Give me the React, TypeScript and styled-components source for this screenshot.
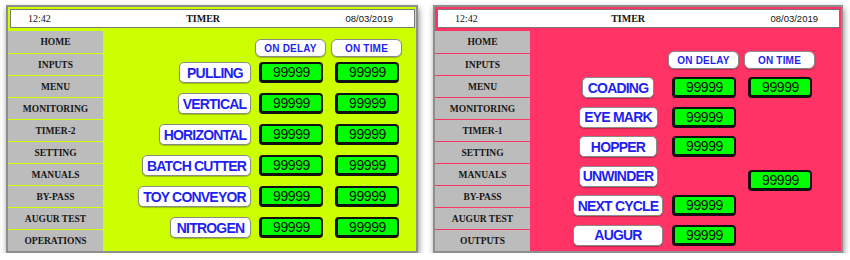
import React from 'react';
import styled, { createGlobalStyle } from 'styled-components';

const GlobalStyle = createGlobalStyle`
  html, body {
    margin: 0;
    padding: 0;
    background: #ffffff;
  }
`;

const Page = styled.div`
  display: flex;
  gap: 15px;
  padding: 5px 0 0 6px;
`;

const Panel = styled.div<{ $bg: string; $w: number }>`
  box-sizing: border-box;
  width: ${p => p.$w}px;
  height: 248px;
  background: ${p => p.$bg};
  border: 2px solid #8e8e8e;
  box-shadow: 1px 3px 6px rgba(0, 0, 0, 0.45);
  display: flex;
  flex-direction: column;
`;

const Header = styled.div`
  box-sizing: border-box;
  height: 19px;
  margin: 2px 1px 0 2px;
  background: #ffffff;
  border: 1px solid #777;
  display: flex;
  align-items: center;
  font-size: 10px;
  color: #111;
`;

const Clock = styled.span`
  padding-left: 17px;
  font-family: "Liberation Serif", serif;
`;

const Title = styled.span<{ $shift: number }>`
  flex: 1;
  text-align: center;
  padding-left: ${p => p.$shift}px;
  font-family: "Liberation Serif", serif;
  font-weight: bold;
`;

const DateText = styled.span`
  padding-right: 21px;
  font-family: "Liberation Sans", Arial, sans-serif;
  font-size: 9.5px;
`;

const Body = styled.div`
  flex: 1;
  display: flex;
  margin-top: 3px;
`;

const Sidebar = styled.div`
  width: 95px;
  display: flex;
  flex-direction: column;
`;

const NavItem = styled.div<{ $line: string }>`
  box-sizing: border-box;
  height: 22px;
  background: #bcbcbc;
  border-top: 1px solid ${p => p.$line};
  display: flex;
  align-items: center;
  justify-content: center;
  font-family: "Liberation Serif", serif;
  font-weight: bold;
  font-size: 9.5px;
  color: #151515;
  &:first-child {
    border-top: none;
  }
`;

const Content = styled.div<{ $top: number; $right: number }>`
  flex: 1;
  display: flex;
  flex-direction: column;
  padding: ${p => p.$top}px ${p => p.$right}px 0 0;
`;

const HeadRow = styled.div<{ $cols: string; $after: number }>`
  display: grid;
  grid-template-columns: ${p => p.$cols};
  justify-content: end;
  column-gap: 4px;
  height: 18px;
  margin-bottom: ${p => p.$after}px;
`;

const Rows = styled.div<{ $gap: number }>`
  display: flex;
  flex-direction: column;
  gap: ${p => p.$gap}px;
`;

const Row = styled.div<{ $cols: string }>`
  display: grid;
  grid-template-columns: ${p => p.$cols};
  justify-content: end;
  column-gap: 4px;
  align-items: center;
  height: 21px;
`;

const ColHead = styled.div<{ $col: number }>`
  grid-column: ${p => p.$col};
  box-sizing: border-box;
  width: 71px;
  height: 18px;
  background: #fff;
  border: 1px solid #8a8a8a;
  border-radius: 6px;
  box-shadow: 0 1px 1px rgba(0, 0, 0, 0.25);
  display: flex;
  align-items: center;
  justify-content: center;
  font-family: "Liberation Sans", Arial, sans-serif;
  font-weight: bold;
  font-size: 10px;
  letter-spacing: 0.2px;
  color: #1f1ff0;
`;

const Label = styled.div<{ $w: number; $align: string }>`
  grid-column: 1;
  justify-self: ${p => p.$align};
  box-sizing: border-box;
  width: ${p => p.$w}px;
  height: 21px;
  background: #fff;
  border: 1px solid #8a8a8a;
  border-radius: 5px;
  box-shadow: 0 1px 1px rgba(0, 0, 0, 0.25);
  display: flex;
  align-items: center;
  justify-content: center;
  font-family: "Liberation Sans", Arial, sans-serif;
  font-weight: bold;
  font-size: 14px;
  letter-spacing: -0.8px;
  color: #1f1ff0;
  white-space: nowrap;
`;

const Value = styled.div<{ $col: number; $drop?: number }>`
  grid-column: ${p => p.$col};
  justify-self: center;
  box-sizing: border-box;
  width: 64px;
  height: 21px;
  margin-top: ${p => p.$drop || 0}px;
  margin-bottom: ${p => -(p.$drop || 0)}px;
  background: #00ff00;
  border: 2px solid #111;
  border-left-width: 3px;
  border-bottom-width: 3px;
  border-radius: 4px;
  display: flex;
  align-items: center;
  justify-content: center;
  font-family: "Liberation Sans", Arial, sans-serif;
  font-size: 14px;
  letter-spacing: -0.4px;
  color: #111;
`;

type Item = { name: string; w: number; delay?: boolean; time?: boolean; drop?: number };

type PanelSpec = {
  bg: string;
  width: number;
  titleShift: number;
  nav: string[];
  cols: string;
  align: string;
  top: number;
  right: number;
  headAfter: number;
  gap: number;
  items: Item[];
};

const panels: PanelSpec[] = [
  {
    bg: '#ccff00',
    width: 412,
    titleShift: 10,
    nav: ['HOME', 'INPUTS', 'MENU', 'MONITORING', 'TIMER-2', 'SETTING', 'MANUALS', 'BY-PASS', 'AUGUR TEST', 'OPERATIONS'],
    cols: '1fr 72px 72px',
    align: 'end',
    top: 8,
    right: 13,
    headAfter: 5,
    gap: 10,
    items: [
      { name: 'PULLING', w: 72, delay: true, time: true },
      { name: 'VERTICAL', w: 73, delay: true, time: true },
      { name: 'HORIZONTAL', w: 92, delay: true, time: true },
      { name: 'BATCH CUTTER', w: 109, delay: true, time: true },
      { name: 'TOY CONVEYOR', w: 113, delay: true, time: true },
      { name: 'NITROGEN', w: 81, delay: true, time: true },
    ],
  },
  {
    bg: '#ff3366',
    width: 410,
    titleShift: 8,
    nav: ['HOME', 'INPUTS', 'MENU', 'MONITORING', 'TIMER-1', 'SETTING', 'MANUALS', 'BY-PASS', 'AUGUR TEST', 'OUTPUTS'],
    cols: '92px 72px 72px',
    align: 'center',
    top: 20,
    right: 25,
    headAfter: 8,
    gap: 8.5,
    items: [
      { name: 'COADING', w: 72, delay: true, time: true },
      { name: 'EYE MARK', w: 79, delay: true },
      { name: 'HOPPER', w: 78, delay: true },
      { name: 'UNWINDER', w: 79, time: true, drop: 4 },
      { name: 'NEXT CYCLE', w: 90, delay: true },
      { name: 'AUGUR', w: 90, delay: true },
    ],
  },
];

const TimerPanel: React.FC<{ spec: PanelSpec }> = ({ spec }) => (
  <Panel $bg={spec.bg} $w={spec.width}>
    <Header>
      <Clock>12:42</Clock>
      <Title $shift={spec.titleShift}>TIMER</Title>
      <DateText>08/03/2019</DateText>
    </Header>
    <Body>
      <Sidebar>
        {spec.nav.map(n => (
          <NavItem key={n} $line={spec.bg}>{n}</NavItem>
        ))}
      </Sidebar>
      <Content $top={spec.top} $right={spec.right}>
        <HeadRow $cols={spec.cols} $after={spec.headAfter}>
          <ColHead $col={2}>ON DELAY</ColHead>
          <ColHead $col={3}>ON TIME</ColHead>
        </HeadRow>
        <Rows $gap={spec.gap}>
          {spec.items.map(it => (
            <Row key={it.name} $cols={spec.cols}>
              <Label $w={it.w} $align={spec.align}>{it.name}</Label>
              {it.delay && <Value $col={2}>99999</Value>}
              {it.time && <Value $col={3} $drop={it.drop}>99999</Value>}
            </Row>
          ))}
        </Rows>
      </Content>
    </Body>
  </Panel>
);

const App: React.FC = () => (
  <>
    <GlobalStyle />
    <Page>
      {panels.map((p, i) => (
        <TimerPanel key={i} spec={p} />
      ))}
    </Page>
  </>
);

export default App;
